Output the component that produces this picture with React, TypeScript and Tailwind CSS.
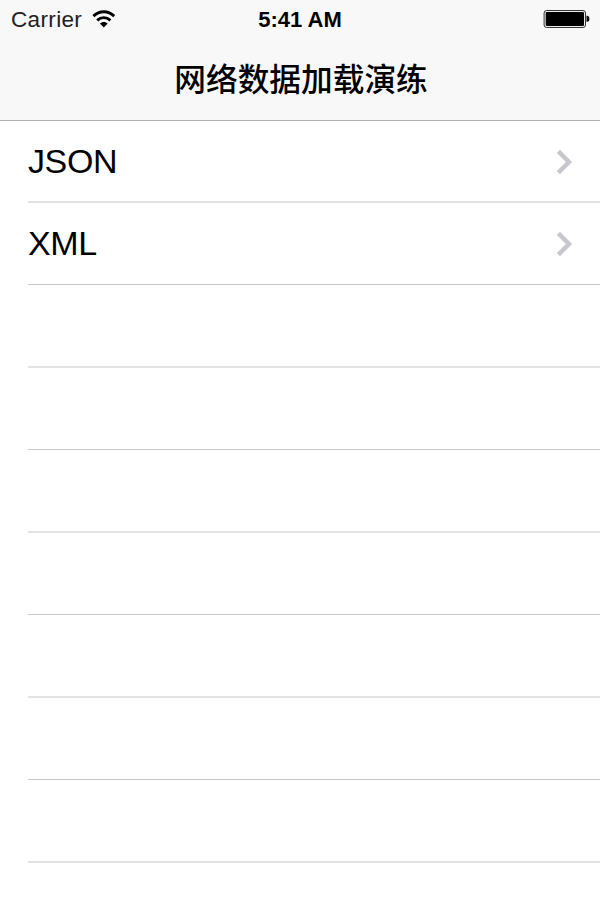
const EMPTY_ROWS = 8;

const items = ["JSON", "XML"];

function WifiIcon() {
  return (
    <svg width="24" height="18" viewBox="0 0 24 18" fill="none" stroke="#000" strokeWidth="2.9">
      <path d="M1.4 6.1C7.4 0.3 16.2 0.3 22.2 6.1" />
      <path d="M5.2 10.4C9.1 6.7 14.5 6.7 18.4 10.4" />
      <path d="M11.8 17.4L7.9 13.6C10.1 11.4 13.5 11.4 15.7 13.6Z" fill="#000" stroke="none" />
    </svg>
  );
}

function BatteryIcon() {
  return (
    <svg width="48" height="20" viewBox="0 0 48 20">
      <rect x="1.1" y="1.5" width="41.4" height="17" rx="2.5" fill="#eee" stroke="#333" strokeWidth="1" />
      <rect x="2.7" y="3" width="38.3" height="14" rx="1" fill="#000" />
      <path d="M43.5 6.8H44.5Q46.5 7.2 46.5 10Q46.5 12.4 44.5 12.8H43.5Z" fill="#000" />
    </svg>
  );
}

function Chevron() {
  return (
    <svg className="mt-px" width="18" height="26" viewBox="0 0 18 26" fill="none" stroke="#c7c7cc" strokeWidth="4.4">
      <path d="M2.4 2.4L13 13L2.4 23.6" />
    </svg>
  );
}

// Row heights are 82/83px in turn, the hairline between them falls on a half pixel every other row
function rowClass(index: number) {
  return index % 2 === 0
    ? "h-[83px] border-b-2 border-[#e3e3e5] pt-px"
    : "h-[82px] border-b border-[#c8c7cc]";
}

function StatusBar() {
  return (
    <div className="grid h-[38px] grid-cols-3 items-center">
      <div className="flex items-center pl-[11px] text-[22.5px] text-[#222]">
        <span className="mr-2.5 pt-0.5 tracking-[0.35px]">Carrier</span>
        <WifiIcon />
      </div>
      <div className="text-center text-[22px] font-bold">5:41 AM</div>
      <div className="flex justify-end pr-[9px]">
        <BatteryIcon />
      </div>
    </div>
  );
}

export default function App() {
  return (
    <div className="h-[900px] w-[600px] overflow-hidden bg-white font-['Liberation_Sans','Noto_Sans_CJK_SC',sans-serif] text-black">
      <header className="h-[121px] border-b border-[#b2b2b2] bg-[#f8f8f8]">
        <StatusBar />
        <h1 className="flex h-[82px] items-center justify-center pt-1 pl-0.5 text-[31.7px] font-medium">
          网络数据加载演练
        </h1>
      </header>
      <ul className="-mt-px pl-7">
        {items.map((item, i) => (
          <li key={item} className={`flex items-center justify-between pr-[26px] ${rowClass(i)}`}>
            <span className="text-[34px] tracking-[-0.4px]">{item}</span>
            <Chevron />
          </li>
        ))}
        {Array.from({ length: EMPTY_ROWS }, (_, i) => (
          <li key={i} className={rowClass(items.length + i)} />
        ))}
      </ul>
    </div>
  );
}
